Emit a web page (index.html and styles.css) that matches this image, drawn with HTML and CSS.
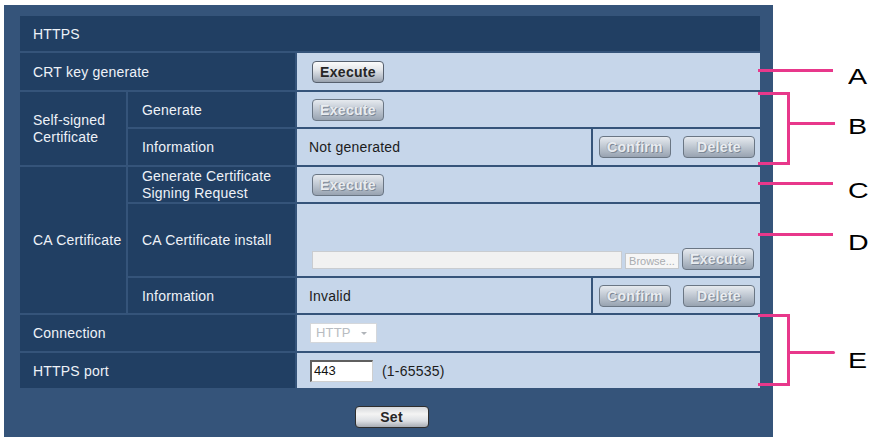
FILE: index.html
```html
<!DOCTYPE html>
<html>
<head>
<meta charset="utf-8">
<link rel="stylesheet" href="styles.css">
</head>
<body>
<div class="page">
  <div class="panel">
    <div class="grid">
      <div class="cell lbl head">HTTPS</div>

      <div class="cell lbl span2">CRT key generate</div>
      <div class="cell val span2v"><button class="btn">Execute</button></div>

      <div class="cell lbl ss multi">Self-signed<br>Certificate</div>
      <div class="cell lbl">Generate</div>
      <div class="cell val span2v"><button class="btn dis">Execute</button></div>
      <div class="cell lbl">Information</div>
      <div class="cell val text">Not generated</div>
      <div class="cell val pair"><button class="btn dis">Confirm</button><button class="btn dis">Delete</button></div>

      <div class="cell lbl ca">CA Certificate</div>
      <div class="cell lbl multi">Generate Certificate<br>Signing Request</div>
      <div class="cell val span2v"><button class="btn dis">Execute</button></div>
      <div class="cell lbl">CA Certificate install</div>
      <div class="cell val span2v install">
        <div class="filebar"></div>
        <span class="browse">Browse...</span>
        <button class="btn dis">Execute</button>
      </div>
      <div class="cell lbl">Information</div>
      <div class="cell val text">Invalid</div>
      <div class="cell val pair"><button class="btn dis">Confirm</button><button class="btn dis">Delete</button></div>

      <div class="cell lbl span2">Connection</div>
      <div class="cell val span2v"><div class="select">HTTP<span class="arrow"></span></div></div>

      <div class="cell lbl span2">HTTPS port</div>
      <div class="cell val span2v"><div class="input">443</div><span class="range">(1-65535)</span></div>
    </div>
    <div class="actions"><button class="btn setbtn">Set</button></div>
  </div>

  <div class="ann line" style="top:69px;left:758px;width:75px"></div>
  <div class="ann bracket" style="top:92px;height:73px"></div>
  <div class="ann line" style="top:122px;left:790px;width:45px"></div>
  <div class="ann line" style="top:182px;left:758px;width:75px"></div>
  <div class="ann line" style="top:233px;left:758px;width:75px"></div>
  <div class="ann bracket" style="top:314px;height:72px"></div>
  <div class="ann line dot" style="top:351px;left:790px;width:45px"></div>

  <div class="letter" style="top:66px">A</div>
  <div class="letter" style="top:116px">B</div>
  <div class="letter" style="top:180px">C</div>
  <div class="letter" style="top:232px">D</div>
  <div class="letter" style="top:350px">E</div>
</div>
</body>
</html>
```
FILE: styles.css
```css
html, body {
  margin: 0;
  padding: 0;
  background: #ffffff;
  font-family: "Liberation Sans", Arial, sans-serif;
}

.page {
  position: relative;
  width: 878px;
  height: 440px;
  padding: 5px 0 0 4px;
  box-sizing: border-box;
}

.panel {
  width: 769px;
  height: 432px;
  box-sizing: border-box;
  background: #35547a;
  padding: 11px 13px 9px 16px;
}

.grid {
  display: grid;
  grid-template-columns: 106px 167px 294px 167px;
  grid-template-rows: 35px 37px 35px 36px 35px 72px 35px 36px 35px;
  gap: 2px;
  width: 740px;
}

.cell {
  display: flex;
  align-items: center;
  box-sizing: border-box;
  font-size: 14px;
  letter-spacing: 0.2px;
}

.lbl {
  background: #213f63;
  color: #eef2f8;
  padding-left: 13px;
}

.head {
  grid-column: 1 / 5;
}

.span2 {
  grid-column: 1 / 3;
}

.span2v {
  grid-column: 3 / 5;
}

.ss {
  grid-row: 3 / 5;
}

.ca {
  grid-row: 5 / 8;
}

.multi {
  line-height: 17px;
}

.lbl:not(.span2):not(.head):not(.ss):not(.ca) {
  padding-left: 14px;
}

.val {
  background: #c6d6ea;
  color: #1c1c1c;
  padding-left: 15px;
}

.text {
  padding-left: 12px;
}

.pair {
  padding-left: 6px;
  gap: 12px;
}

.install {
  align-items: flex-end;
  padding-bottom: 6px;
}

.btn {
  width: 72px;
  height: 22px;
  box-sizing: border-box;
  border: 1px solid #56606e;
  border-radius: 4px;
  background: linear-gradient(#fbfbfb 0%, #e2e5e9 40%, #b9c0ca 75%, #98a1ad 100%);
  font-family: "Liberation Sans", Arial, sans-serif;
  font-weight: bold;
  font-size: 14px;
  color: #262626;
  padding: 0;
  margin: 0;
  letter-spacing: 0.3px;
}

.btn.dis {
  color: #e9ecf0;
  border-color: #6a7684;
  background: linear-gradient(#e6eaef 0%, #c2cad4 45%, #98a3b1 100%);
  text-shadow: 1px 1px 0 #7d8896, -1px 0 0 #a4adb8;
}

.filebar {
  width: 310px;
  height: 18px;
  box-sizing: border-box;
  background: #f1f1f1;
  border: 1px solid #c9ccd0;
  margin-bottom: 1px;
}

.browse {
  width: 54px;
  height: 16px;
  box-sizing: border-box;
  margin-left: 3px;
  margin-bottom: 1px;
  border: 1px solid #c4c8cc;
  background: #f6f6f6;
  color: #a9acb0;
  font-size: 11px;
  line-height: 14px;
  text-align: center;
  letter-spacing: 0;
}

.install .btn {
  margin-left: 3px;
}

.select {
  position: relative;
  width: 67px;
  height: 20px;
  box-sizing: border-box;
  margin-left: -2px;
  background: #ffffff;
  border: 1px solid #d4d7db;
  color: #b8bcc1;
  font-size: 13px;
  line-height: 18px;
  padding-left: 5px;
}

.arrow {
  position: absolute;
  right: 9px;
  top: 8px;
  width: 0;
  height: 0;
  border-left: 3px solid transparent;
  border-right: 3px solid transparent;
  border-top: 3px solid #b0b4b9;
}

.input {
  width: 63px;
  height: 22px;
  box-sizing: border-box;
  margin-left: -2px;
  background: #ffffff;
  border-style: solid;
  border-width: 2px 1px 1px 2px;
  border-color: #5f5f5f #cfcfcf #cfcfcf #5f5f5f;
  font-size: 13px;
  color: #111;
  line-height: 18px;
  padding-left: 2px;
  letter-spacing: 0;
}

.range {
  margin-left: 9px;
}

.actions {
  display: flex;
  justify-content: center;
  margin-top: 18px;
  padding-left: 3px;
}

.setbtn {
  width: 74px;
  border-color: #2e2e2e;
  background: linear-gradient(#d6d8db 0%, #f4f4f4 35%, #dcdfe3 70%, #a8adb4 100%);
}

.ann {
  position: absolute;
  background: #e8388b;
}

.line {
  height: 3px;
}

.line.dot {
  border-radius: 0 2px 2px 0;
  width: 45px;
}

.bracket {
  position: absolute;
  left: 758px;
  width: 32px;
  background: transparent;
  border: 3px solid #e8388b;
  border-left: none;
  box-sizing: border-box;
}

.letter {
  position: absolute;
  left: 848px;
  font-family: "Liberation Sans", Arial, sans-serif;
  font-size: 22px;
  line-height: 22px;
  color: #000;
  transform: scaleX(1.3);
  transform-origin: left top;
}
```
